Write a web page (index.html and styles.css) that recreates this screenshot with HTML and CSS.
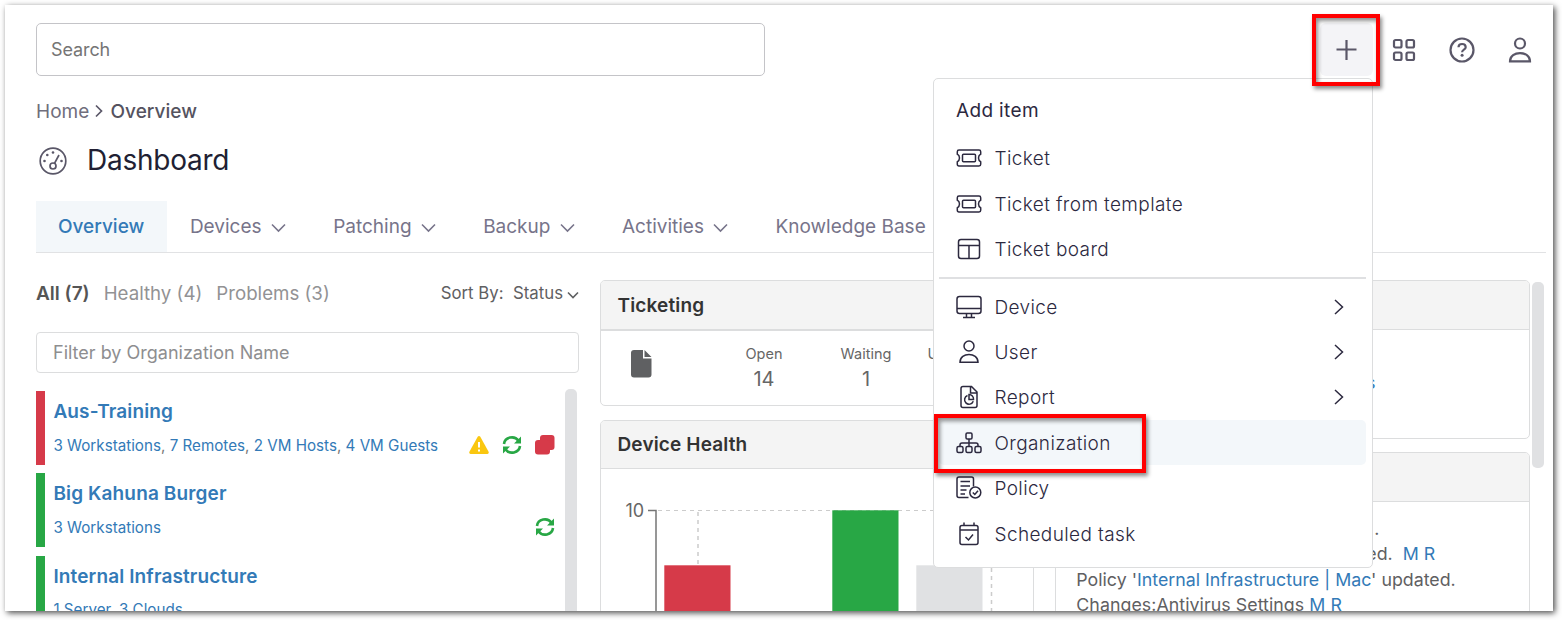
FILE: index.html
```html
<!DOCTYPE html>
<html lang="en">
<head>
<meta charset="UTF-8">
<meta name="viewport" content="width=device-width, initial-scale=1.0">
<title>Dashboard</title>
<link rel="stylesheet" href="styles.css">
</head>
<body>
<div class="window">
    <div class="topbar">
        <input class="search" type="text" placeholder="Search">
        <div class="top-icons">
            <button class="icon-btn active">
                <svg width="22" height="22" viewBox="0 0 22 22"><path d="M11.500 1v20M1.500 10.500h20"/></svg>
            </button>
            <button class="icon-btn">
                <svg width="24" height="24" viewBox="0 0 24 24"><rect x="2" y="2" width="7.5" height="7.5" rx="1.5"/><rect x="14.5" y="2" width="7.5" height="7.5" rx="1.5"/><rect x="2" y="14.5" width="7.5" height="7.5" rx="1.5"/><rect x="14.5" y="14.5" width="7.5" height="7.5" rx="1.5"/></svg>
            </button>
            <button class="icon-btn">
                <svg width="26" height="26" viewBox="0 0 26 26"><circle cx="13" cy="13" r="11.5"/><path d="M9.500 10.200c0-4.300 7.200-4.300 7.200 0 0 2.500-3.600 2.500-3.600 5"/><circle class="dot" cx="13.100" cy="18.200" r="1.500"/></svg>
            </button>
            <button class="icon-btn">
                <svg width="24" height="26" viewBox="0 0 24 26"><circle cx="12" cy="6.500" r="5"/><path d="M2 24.300c0-11 20-11 20 0z"/></svg>
            </button>
        </div>
    </div>

    <div class="breadcrumb">
        <span>Home</span>
        <svg width="9" height="14" viewBox="0 0 9 14"><path d="M1 1.500L6.500 7 1 12.500"/></svg>
        <span class="current">Overview</span>
    </div>

    <div class="page-title">
        <svg width="30" height="30" viewBox="0 0 30 30"><circle cx="15" cy="15" r="12.800"/><circle cx="15" cy="20" r="3"/><path d="M16.500 17.300L21 9"/><g class="dot"><circle cx="6.500" cy="15" r="1.300"/><circle cx="9.300" cy="9" r="1.300"/><circle cx="15" cy="6.500" r="1.300"/><circle cx="23.500" cy="15" r="1.300"/></g></svg>
        <h1>Dashboard</h1>
    </div>

    <div class="tabs">
        <div class="tab selected">Overview</div>
        <div class="tab">Devices <svg class="chev" width="16" height="10" viewBox="0 0 16 10"><path d="M1 1.500L7.500 8 14 1.500"/></svg></div>
        <div class="tab">Patching <svg class="chev" width="16" height="10" viewBox="0 0 16 10"><path d="M1 1.500L7.500 8 14 1.500"/></svg></div>
        <div class="tab">Backup <svg class="chev" width="16" height="10" viewBox="0 0 16 10"><path d="M1 1.500L7.500 8 14 1.500"/></svg></div>
        <div class="tab">Activities <svg class="chev" width="16" height="10" viewBox="0 0 16 10"><path d="M1 1.500L7.500 8 14 1.500"/></svg></div>
        <div class="tab">Knowledge Base</div>
    </div>

    <div class="content">
        <div class="orgs">
            <div class="filters">
                <span class="filter on">All (7)</span>
                <span class="filter">Healthy (4)</span>
                <span class="filter">Problems (3)</span>
                <span class="sort">Sort By:&nbsp; Status</span>
                <svg width="12" height="8" viewBox="0 0 12 8"><path d="M1 1.500l5 5 5-5"/></svg>
            </div>
            <input class="org-filter" type="text" placeholder="Filter by Organization Name">
            <div class="org-scroll">
                <div class="org-list">
                    <div class="org down">
                        <div class="org-name">Aus-Training</div>
                        <div class="org-row">
                            <div class="org-devices"><a>3 Workstations</a>, <a>7 Remotes</a>, <a>2 VM Hosts</a>, <a>4 VM Guests</a></div>
                            <div class="org-icons">
                                <svg width="20" height="18" viewBox="0 0 20 18"><path fill="#fac710" d="M8.700.8a1.500 1.500 0 0 1 2.600 0l8.300 14.900a1.500 1.500 0 0 1-1.300 2.200H1.700a1.500 1.500 0 0 1-1.300-2.200z"/><path stroke="#fff" stroke-width="2" d="M10 6v5.500M10 13.500v2"/></svg>
                                <svg width="20" height="18" viewBox="0 0 20 18"><g fill="none" stroke="#28a745" stroke-width="2.600"><path d="M2 8c.8-7 10.500-9 14.500-3.200"/><path d="M18 10c-.8 7-10.500 9-14.500 3.200"/></g><path fill="#28a745" d="M19 .5v7h-7zM1 17.500v-7h7z"/></svg>
                                <svg width="20" height="20" viewBox="0 0 20 20"><rect x="5" y="0" width="14.500" height="15" rx="3" fill="#d63a49"/><rect x="0" y="5" width="15" height="14.500" rx="3" fill="#d63a49"/></svg>
                            </div>
                        </div>
                    </div>
                    <div class="org">
                        <div class="org-name">Big Kahuna Burger</div>
                        <div class="org-row">
                            <div class="org-devices"><a>3 Workstations</a></div>
                            <div class="org-icons">
                                <svg width="20" height="18" viewBox="0 0 20 18"><g fill="none" stroke="#28a745" stroke-width="2.600"><path d="M2 8c.8-7 10.500-9 14.500-3.200"/><path d="M18 10c-.8 7-10.500 9-14.500 3.200"/></g><path fill="#28a745" d="M19 .5v7h-7zM1 17.500v-7h7z"/></svg>
                            </div>
                        </div>
                    </div>
                    <div class="org">
                        <div class="org-name">Internal Infrastructure</div>
                        <div class="org-row">
                            <div class="org-devices"><a>1 Server</a>, <a>3 Clouds</a></div>
                        </div>
                    </div>
                </div>
                <div class="scrollbar"></div>
            </div>
        </div>

        <div class="col-main">
            <div class="card ticketing">
                <div class="card-head">Ticketing</div>
                <div class="stats">
                    <svg width="21" height="28" viewBox="0 0 21 28"><path fill="#5f6062" d="M3 0h9v8.500h8.500V24.500a3 3 0 0 1-3 3H3a3 3 0 0 1-3-3V3a3 3 0 0 1 3-3zM13.500 0l7 7h-7z"/></svg>
                    <div class="stat"><span>Open</span><b>14</b></div>
                    <div class="stat"><span>Waiting</span><b>1</b></div>
                    <div class="stat"><span>Unassigned</span></div>
                </div>
            </div>
            <div class="card health">
                <div class="card-head">Device Health</div>
                <svg class="chart" width="432" height="143" viewBox="0 0 432 143">
                    <text x="24.500" y="48">10</text>
                    <path stroke="#ccc" stroke-dasharray="4 4" d="M57 41.500h334"/>
                    <path stroke="#ccc" stroke-width="1.500" stroke-dasharray="4 4" d="M97 43v56M390.500 43v100"/>
                    <path fill="none" stroke="#757575" stroke-width="1.500" d="M47 41.500h8V143"/>
                    <rect x="63.300" y="96.300" width="66.200" height="50" fill="#d63a49"/>
                    <rect x="231.300" y="41.300" width="66.200" height="110" fill="#28a745"/>
                    <rect x="315.300" y="96.300" width="66.200" height="50" fill="#e0e1e3"/>
                </svg>
            </div>
        </div>

        <div class="col-side">
            <div class="card systems">
                <div class="card-head"></div>
                <div class="link-end"><a>s</a></div>
            </div>
            <div class="card events">
                <div class="card-head"></div>
                <div class="log">
                    <p class="tail-a">.</p>
                    <p class="tail-b">ed.&nbsp; <a>M R</a></p>
                    <p>Policy '<a>Internal Infrastructure | Mac</a>' updated.</p>
                    <p class="last">Changes:Antivirus Settings <a>M R</a></p>
                </div>
            </div>
        </div>
        <div class="scrollbar page-scroll"></div>
    </div>

    <!-- add item menu -->
    <div class="menu">
        <div class="menu-title">Add item</div>
        <div class="menu-item">
            <svg width="26" height="26" viewBox="0 0 26 26"><path d="M3 5h20q1.700 0 1.700 1.700v2.500q-2.200 1.300-2.200 3.800t2.200 3.800v2.500q0 1.700-1.700 1.700H3q-1.700 0-1.700-1.700v-2.500q2.200-1.300 2.200-3.800T1.300 9.200V6.700Q1.300 5 3 5z"/><rect x="6.500" y="9.300" width="13" height="7.400" rx="1"/></svg>
            <span>Ticket</span>
        </div>
        <div class="menu-item">
            <svg width="26" height="26" viewBox="0 0 26 26"><path d="M3 5h20q1.700 0 1.700 1.700v2.500q-2.200 1.300-2.200 3.800t2.200 3.800v2.500q0 1.700-1.700 1.700H3q-1.700 0-1.700-1.700v-2.500q2.200-1.300 2.200-3.800T1.300 9.200V6.700Q1.300 5 3 5z"/><rect x="6.500" y="9.300" width="13" height="7.400" rx="1"/></svg>
            <span>Ticket from template</span>
        </div>
        <div class="menu-item">
            <svg width="26" height="26" viewBox="0 0 26 26"><rect x="2.500" y="3.500" width="21" height="19" rx="2.500"/><path d="M2.500 9.500h21M13 9.500v13"/></svg>
            <span>Ticket board</span>
        </div>
        <div class="divider"></div>
        <div class="menu-item">
            <svg width="26" height="26" viewBox="0 0 26 26"><rect x="1" y="2.500" width="24" height="17" rx="2.500"/><path d="M1 14.500h24M10.500 19.500v4M15.500 19.500v4M7 23.500h12"/></svg>
            <span>Device</span>
            <svg class="arrow" width="10" height="16" viewBox="0 0 10 16"><path d="M1 1l7.500 7L1 15"/></svg>
        </div>
        <div class="menu-item">
            <svg width="26" height="26" viewBox="0 0 26 26"><circle cx="13" cy="7" r="5"/><path d="M4 23.300c0-10.500 18-10.500 18 0z"/></svg>
            <span>User</span>
            <svg class="arrow" width="10" height="16" viewBox="0 0 10 16"><path d="M1 1l7.500 7L1 15"/></svg>
        </div>
        <div class="menu-item">
            <svg width="26" height="26" viewBox="0 0 26 26"><path d="M7 2.500h8.500l5.500 5.500v13.500q0 2-2 2H7q-2 0-2-2v-17q0-2 2-2zM14.500 2.500v6.500H21"/><path d="M11.500 11.500a4.500 4.500 0 1 0 5.800 5.800"/><path d="M13 10.500v5h4.500a4.500 4.500 0 0 0-4.500-5z"/></svg>
            <span>Report</span>
            <svg class="arrow" width="10" height="16" viewBox="0 0 10 16"><path d="M1 1l7.500 7L1 15"/></svg>
        </div>
        <div class="menu-item hover">
            <svg width="26" height="26" viewBox="0 0 26 26"><rect x="10" y="3" width="6" height="6" rx="1.200"/><rect x="1" y="16.500" width="6" height="6" rx="1.500"/><rect x="10" y="16.500" width="6" height="6" rx="1.500"/><rect x="19" y="16.500" width="6" height="6" rx="1.500"/><path d="M13 9v7.500M4 16.500V15q0-2 2-2h14q2 0 2 2v1.500"/></svg>
            <span>Organization</span>
        </div>
        <div class="menu-item">
            <svg width="26" height="26" viewBox="0 0 26 26"><path d="M17.500 11.500V4q0-2-2-2H3Q1 2 1 4v16.500q0 2 2 2h9.500M4.500 6.500h9.500M4.500 11h9.500M4.500 15h6M4.500 19h4.500"/><circle cx="19.300" cy="17.500" r="5.500"/><path d="M16.800 17.500l2 2 3.200-3.700"/></svg>
            <span>Policy</span>
        </div>
        <div class="menu-item">
            <svg width="26" height="26" viewBox="0 0 26 26"><rect x="4" y="4.500" width="18" height="19" rx="2"/><path d="M4 9h18M8 1.500v3M18 1.500v3M9.500 16l3 3 4.500-5.500"/></svg>
            <span>Scheduled task</span>
        </div>
    </div>

    <div class="mark mark-add"></div>
    <div class="mark mark-org"></div>
</div>
</body>
</html>
```
FILE: styles.css
```css
*{
    box-sizing: border-box;
}
body{
    margin: 0;
    height: 620px;
    background: #fff;
    font-family: Inter, "Liberation Sans", sans-serif;
    overflow: hidden;
}
svg{
    display: block;
    flex: none;
    overflow: visible;
}
/* soft frame around the window */
.window{
    position: relative;
    width: 1548px;
    height: 606px;
    margin: 5px 0 0 5px;
    padding: 18px 0 0 31px;
    background: #fff;
    overflow: hidden;
    box-shadow: 2px 2px 6px rgba(0,0,0,.7);
}

/* top bar */
.topbar{
    display: flex;
    justify-content: space-between;
    height: 53px;
}
.search{
    width: 729px;
    height: 53px;
    padding: 0 14px;
    border: 1px solid #c4c4c8;
    border-radius: 5px;
    font: 18px Inter, sans-serif;
    letter-spacing: -.1px;
    outline: none;
}
.search::placeholder{
    color: #757575;
    opacity: 1;
}
.top-icons{
    display: flex;
    gap: 4.700px;
    padding-right: 7px;
}
.icon-btn{
    display: flex;
    align-items: center;
    justify-content: center;
    width: 53px;
    height: 53px;
    padding: 0;
    border: 0;
    border-radius: 6px;
    background: none;
}
.icon-btn.active{
    background: #f4f4f7;
}
.icon-btn svg{
    fill: none;
    stroke: #5a5768;
    stroke-width: 2.200;
}
.icon-btn .dot{
    fill: #5a5768;
    stroke: none;
}

/* heading */
.breadcrumb{
    display: flex;
    align-items: center;
    gap: 6px;
    height: 24px;
    margin-top: 23px;
    font-size: 19px;
    letter-spacing: .05px;
    color: #706e7c;
}
.breadcrumb svg{
    fill: none;
    stroke: #5a5768;
    stroke-width: 1.7;
}
.breadcrumb .current{
    color: #55535f;
    font-weight: 500;
}
.page-title{
    display: flex;
    align-items: center;
    gap: 19px;
    height: 40px;
    margin: 17px 0 0 2px;
}
.page-title svg{
    margin-top: 1px;
    fill: none;
    stroke: #5a5768;
    stroke-width: 1.7;
}
.page-title .dot{
    fill: #5a5768;
    stroke: none;
}
.page-title h1{
    margin: 0;
    font-size: 28px;
    font-weight: 430;
    letter-spacing: -.250px;
    color: #211f33;
}
.tabs{
    display: flex;
    height: 52px;
    margin: 21px 7px 0 0;
    border-bottom: 1px solid #e1e2e4;
}
.tab{
    display: flex;
    align-items: center;
    gap: 9.500px;
    padding: 0 23.200px 0 22.900px;
    font-size: 19px;
    color: #77748a;
}
.tab.selected{
    width: 131px;
    padding: 0 22px;
    background: #f3f7fa;
    color: #337ab7;
    font-weight: 500;
}
.chev{
    margin-top: 3px;
    fill: none;
    stroke: #77748a;
    stroke-width: 1.6;
}

/* content */
.content{
    display: flex;
    margin-top: 27px;
}
a{
    color: #337ab7;
}
.orgs{
    width: 543px;
}
.filters{
    display: flex;
    align-items: center;
    height: 26px;
    color: #929294;
}
.filter{
    margin-right: 14px;
    font-size: 18.700px;
}
.filter.on{
    font-size: 19px;
    color: #555;
    font-weight: 600;
}
.sort{
    margin-left: auto;
    margin-right: 4px;
    font-size: 16.800px;
    color: #5f6062;
}
.filters svg{
    margin-top: 3px;
    fill: none;
    stroke: #5f6062;
    stroke-width: 1.6;
}
.org-filter{
    display: block;
    width: 543px;
    height: 41px;
    margin-top: 26px;
    padding: 0 16px;
    border: 1px solid #dcddde;
    border-radius: 4px;
    font: 18px Inter, sans-serif;
    outline: none;
}
.org-filter::placeholder{
    color: #8e8e90;
    opacity: 1;
}
.org-scroll{
    display: flex;
    justify-content: space-between;
    margin-top: 16px;
    padding-right: 2px;
}
.org-list{
    width: 519px;
    padding-top: 2px;
}
.org{
    height: 74px;
    margin-bottom: 8.400px;
    padding: 9px 0 0 8.400px;
    border-left: 9px solid #28a745;
}
.org.down{
    border-left-color: #d63a49;
}
.org-name{
    height: 24px;
    line-height: 24px;
    font-size: 19px;
    font-weight: 600;
    letter-spacing: .13px;
    color: #337ab7;
}
.org-row{
    display: flex;
    justify-content: space-between;
    align-items: center;
    height: 22px;
    margin-top: 10px;
}
.org-devices{
    font-size: 15.200px;
    color: #777;
}
.org-icons{
    display: flex;
    align-items: center;
    gap: 13px;
    margin-top: -1px;
}
.scrollbar{
    width: 12px;
    height: 300px;
    border-radius: 5px;
    background: #e0e1e3;
}

/* cards */
.card{
    border: 1px solid #dcddde;
    border-radius: 5px;
    overflow: hidden;
}
.card-head{
    height: 49px;
    padding-left: 16.500px;
    border-bottom: 1px solid #dcddde;
    background: #f4f4f4;
    line-height: 48px;
    font-size: 19px;
    font-weight: 600;
    letter-spacing: .15px;
    color: #333;
}
.col-main{
    width: 434px;
    margin-left: 21px;
}
.col-side{
    width: 475px;
    margin-left: 21px;
}
.ticketing{
    height: 126px;
}
.ticketing .card-head{
    height: 50px;
    border-bottom-width: 2px;
    line-height: 50px;
}
.stats{
    display: flex;
    padding: 19px 0 0 30px;
}
.stats svg{
    margin-right: 61px;
}
.stat{
    display: flex;
    flex-direction: column;
    align-items: center;
    width: 102px;
    margin-top: -6px;
    font-size: 14.500px;
    line-height: 20px;
    color: #666;
}
.stat b{
    margin-top: 2px;
    font-size: 20px;
    font-weight: 400;
    line-height: 26px;
}
.health{
    height: 220px;
    margin-top: 14px;
}
.health .card-head{
    height: 48px;
}
.chart text{
    font-size: 18px;
    fill: #666;
}
.systems{
    height: 159px;
}
.link-end{
    padding: 42px 0 0 310px;
    font-size: 18px;
}
.events{
    height: 200px;
    margin-top: 13px;
}
.log{
    padding: 14px 0 0 20.300px;
    font-size: 17.800px;
    color: #5f6062;
}
.log p{
    margin: 0;
    height: 25.300px;
    line-height: 25.300px;
    white-space: nowrap;
}
.log .tail-a{
    padding-left: 298px;
}
.log .tail-b{
    padding-left: 290px;
}
.log .last{
    letter-spacing: .05px;
}
.page-scroll{
    height: 186px;
    margin: 2px 0 0 2px;
}

/* dropdown */
.menu{
    position: absolute;
    top: 73px;
    left: 928px;
    width: 440px;
    height: 490px;
    padding: 8px 6px 0 5px;
    border: 1px solid #dcddde;
    border-radius: 5px;
    background: #fff;
    color: #2c293f;
}
.menu-title{
    height: 48.700px;
    padding-left: 17px;
    line-height: 47px;
    font-size: 19px;
    font-weight: 430;
    letter-spacing: .35px;
}
.menu-item{
    display: flex;
    align-items: center;
    height: 45.400px;
    padding: 0 22px 0 17px;
    border-radius: 5px;
    font-size: 19px;
    font-weight: 300;
    letter-spacing: .38px;
}
.menu-item.hover{
    background: #f3f7fa;
}
.menu-item svg{
    fill: none;
    stroke: #2c293f;
    stroke-width: 1.5;
}
.menu-item span{
    margin: 1px 0 0 12.500px;
}
.menu-item .arrow{
    margin-left: auto;
}
.divider{
    height: 2px;
    margin: 5px 0;
    background: #dfe0e2;
}

/* red callouts */
.mark{
    position: absolute;
    border: 4px solid #f00;
    box-shadow: 2px 3px 4px rgba(0,0,0,.45), inset 2px 3px 4px rgba(0,0,0,.45);
}
.mark-add{
    top: 9px;
    left: 1307px;
    width: 68px;
    height: 72px;
}
.mark-org{
    top: 409px;
    left: 929px;
    width: 212px;
    height: 59px;
}
```
